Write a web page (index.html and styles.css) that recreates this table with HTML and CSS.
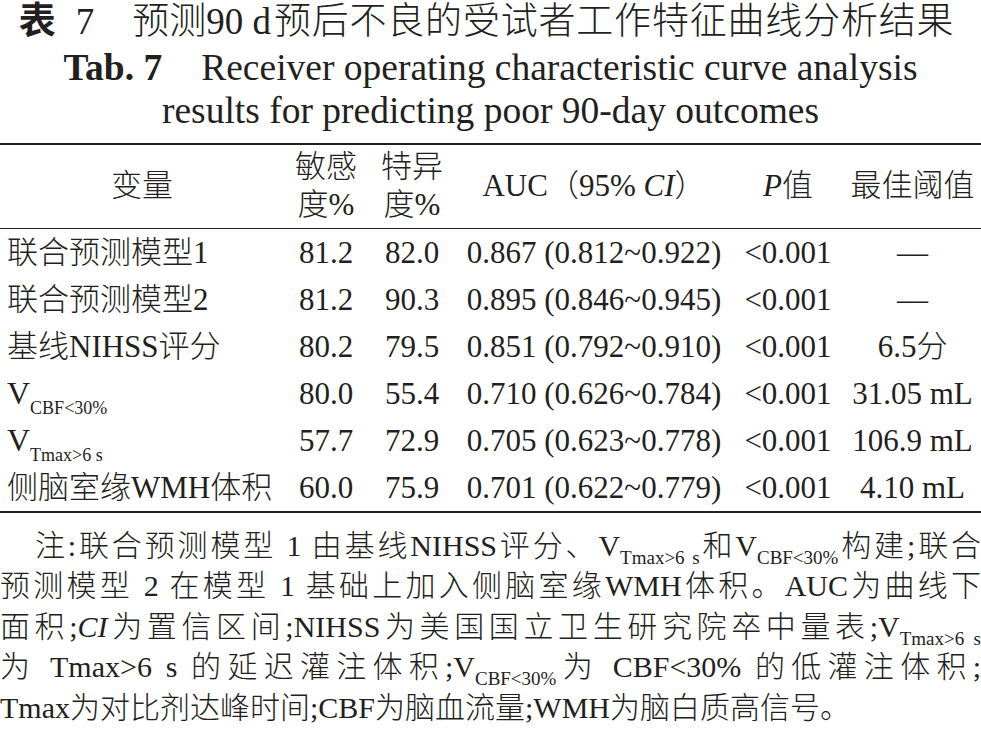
FILE: index.html
```html
<!DOCTYPE html>
<html lang="zh-CN">
<head>
<meta charset="utf-8">
<title>表 7 预测90 d预后不良的受试者工作特征曲线分析结果</title>
<link rel="stylesheet" href="styles.css">
</head>
<body>
<div class="page">
  <header class="caption">
    <h1 class="cap-cn"><span class="cap-label">表</span><span class="cap-no">7</span><span class="cap-gap"></span>预测90 d<span class="cap-tail">预后不良的受试者工作特征曲线分析结果</span></h1>
    <p class="cap-en cap-en-first"><b>Tab. 7</b><span class="cap-gap-en"></span>Receiver operating characteristic curve analysis</p>
    <p class="cap-en cap-en-second">results for predicting poor 90-day outcomes</p>
  </header>

  <div class="table-wrap">
    <table class="roc">
      <colgroup>
        <col class="w-var">
        <col class="w-sens">
        <col class="w-spec">
        <col class="w-auc">
        <col class="w-p">
        <col class="w-cut">
      </colgroup>
      <thead>
        <tr>
          <th>变量</th>
          <th>敏感<br>度%</th>
          <th>特异<br>度%</th>
          <th>AUC（95% <i>CI</i>）</th>
          <th><i>P</i>值</th>
          <th>最佳阈值</th>
        </tr>
      </thead>
      <tbody>
        <tr>
          <td class="c-var">联合预测模型1</td>
          <td>81.2</td><td>82.0</td><td>0.867 (0.812~0.922)</td><td>&lt;0.001</td><td>—</td>
        </tr>
        <tr>
          <td class="c-var">联合预测模型2</td>
          <td>81.2</td><td>90.3</td><td>0.895 (0.846~0.945)</td><td>&lt;0.001</td><td>—</td>
        </tr>
        <tr>
          <td class="c-var">基线NIHSS评分</td>
          <td>80.2</td><td>79.5</td><td>0.851 (0.792~0.910)</td><td>&lt;0.001</td><td>6.5分</td>
        </tr>
        <tr>
          <td class="c-var"><span class="vv">V</span><sub class="tsub">CBF&lt;30%</sub></td>
          <td>80.0</td><td>55.4</td><td>0.710 (0.626~0.784)</td><td>&lt;0.001</td><td>31.05 mL</td>
        </tr>
        <tr>
          <td class="c-var"><span class="vv">V</span><sub class="tsub">Tmax&gt;6 s</sub></td>
          <td>57.7</td><td>72.9</td><td>0.705 (0.623~0.778)</td><td>&lt;0.001</td><td>106.9 mL</td>
        </tr>
        <tr>
          <td class="c-var">侧脑室缘WMH体积</td>
          <td>60.0</td><td>75.9</td><td>0.701 (0.622~0.779)</td><td>&lt;0.001</td><td>4.10 mL</td>
        </tr>
      </tbody>
    </table>
  </div>

  <div class="notes">
    <div class="note-line first">注:联合预测模型 1 由基线NIHSS评分、V<sub class="nsub">Tmax&gt;6 s</sub>和V<sub class="nsub">CBF&lt;30%</sub>构建;联合</div>
    <div class="note-line">预测模型 2 在模型 1 基础上加入侧脑室缘WMH体积。AUC为曲线下</div>
    <div class="note-line">面积;<i>CI</i>为置信区间;NIHSS为美国国立卫生研究院卒中量表;V<sub class="nsub">Tmax&gt;6 s</sub></div>
    <div class="note-line">为 Tmax&gt;6 s 的延迟灌注体积;V<sub class="nsub">CBF&lt;30%</sub>为 CBF&lt;30% 的低灌注体积;</div>
    <div class="note-line last">Tmax为对比剂达峰时间;CBF为脑血流量;WMH为脑白质高信号。</div>
  </div>
</div>
</body>
</html>
```

FILE: styles.css
```css
* {
  box-sizing: border-box;
}

html,
body {
  margin: 0;
  padding: 0;
  background: #ffffff;
}

body {
  font-family: "Liberation Serif", "Noto Sans CJK SC", serif;
  color: #231f20;
  font-weight: 300;
}

.page {
  width: 981px;
}

/* ---------- caption ---------- */
.caption {
  text-align: center;
}

.cap-cn {
  margin: 0;
  padding-right: 8px;
  font-size: 37px;
  line-height: 44px;
  font-weight: 300;
  white-space: nowrap;
}

.cap-label {
  font-weight: 700;
}

.cap-no {
  margin-left: 20px;
}

.cap-gap {
  display: inline-block;
  width: 38px;
}

.cap-tail {
  margin-left: 3px;
  letter-spacing: 0.8px;
}

.cap-gap-en {
  display: inline-block;
  width: 39px;
}

.cap-en {
  margin: 0;
  font-size: 37.5px;
  line-height: 40px;
  white-space: nowrap;
}

.cap-en b {
  font-weight: 700;
}

.cap-en-first {
  margin-top: 4px;
}

.cap-en-second {
  margin-top: 3px;
}

/* ---------- table ---------- */
.table-wrap {
  margin-top: 12px;
  border-top: 2px solid #231f20;
  border-bottom: 2px solid #231f20;
}

.roc {
  width: 100%;
  border-collapse: collapse;
  table-layout: fixed;
  font-size: 31px;
}

.w-var { width: 284px; }
.w-sens { width: 84px; }
.w-spec { width: 88px; }
.w-auc { width: 276px; }
.w-p { width: 112px; }
.w-cut { width: 137px; }

.roc th {
  font-weight: 300;
  height: 83px;
  line-height: 38px;
  padding: 0;
  text-align: center;
  border-bottom: 1px solid #231f20;
}

.roc td {
  height: 47px;
  line-height: 47px;
  padding: 0;
  text-align: center;
  white-space: nowrap;
}

.roc td.c-var {
  text-align: left;
  padding-left: 7px;
}

.vv {
  font-size: 32px;
}

.tsub {
  font-size: 18px;
  line-height: 0;
  vertical-align: -10px;
}

/* ---------- notes ---------- */
.notes {
  font-size: 30px;
  line-height: 40.5px;
  padding-top: 13px;
}

.note-line {
  text-align: justify;
  text-align-last: justify;
}

.note-line.first {
  text-indent: 35px;
}

.note-line.last {
  text-align: left;
  text-align-last: left;
}

.nsub {
  font-size: 19px;
  line-height: 0;
  vertical-align: -8px;
}
```
